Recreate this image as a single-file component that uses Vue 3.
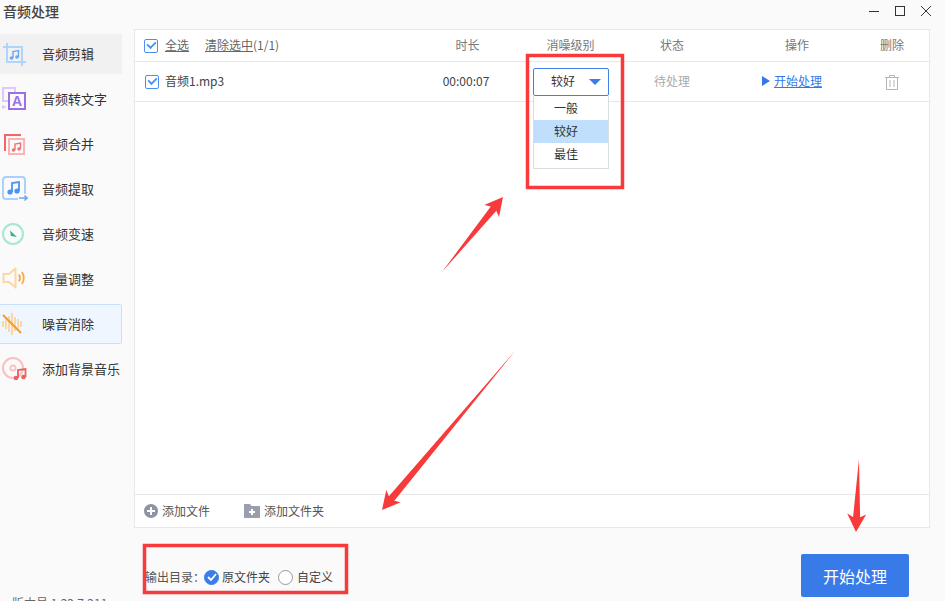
<script setup>
const menu = ['一般', '较好', '最佳']

// red annotation arrows, tail -> tip
function arrow(x0, y0, x1, y1) {
  const dx = x1 - x0
  const dy = y1 - y0
  const len = Math.hypot(dx, dy)
  const ux = dx / len
  const uy = dy / len
  const at = (back, side) =>
    `${(x1 - ux * back - uy * side).toFixed(1)},${(y1 - uy * back + ux * side).toFixed(1)}`
  return [`${x0},${y0}`, at(15, 3.5), at(18, 9.5), `${x1},${y1}`, at(18, -9.5), at(15, -3.5)].join(' ')
}

const arrows = [
  arrow(442, 272, 503, 197),
  arrow(515, 351, 382, 510),
  arrow(859, 459, 856, 532)
]
</script>

<template>
  <div class="page">
    <header class="titlebar">
      <span class="title">音频处理</span>
      <svg class="winctl" width="62" height="29" viewBox="0 0 62 29" fill="none" stroke="#333" stroke-width="1">
        <path d="M0 11.500H10" />
        <rect x="26.500" y="6.500" width="9" height="9" />
        <path d="M52 6L62 16M62 6L52 16" />
      </svg>
    </header>

    <div class="body">
      <aside class="side">
        <div class="item item--hover">
          <svg class="ico" width="28" height="28" viewBox="0 0 28 28" fill="none">
            <path d="M7 3V22H26M3 7H22V26" stroke="#b0d4fb" stroke-width="2" />
            <g fill="#6aa8f2"><circle cx="11.500" cy="18" r="1.800" /><circle cx="17" cy="17" r="1.800" /></g>
            <path d="M13 18V11.500L18.500 10.500V17" stroke="#6aa8f2" stroke-width="1.400" />
          </svg>
          <span>音频剪辑</span>
        </div>
        <div class="item">
          <svg class="ico" width="28" height="28" viewBox="0 0 28 28" fill="none">
            <path d="M9 16H3V3H15V7" stroke="#dccbf7" stroke-width="2" />
            <path d="M2 20L7 22L2 24Z" fill="#dccbf7" />
            <rect x="9" y="8" width="16" height="16" stroke="#9b6fe8" stroke-width="2" />
            <text x="17" y="21" text-anchor="middle" class="ico-a">A</text>
          </svg>
          <span>音频转文字</span>
        </div>
        <div class="item">
          <svg class="ico" width="28" height="28" viewBox="0 0 28 28" fill="none">
            <rect x="9" y="9" width="15" height="15" stroke="#fbb4b4" stroke-width="2" />
            <path d="M5 21V5H21" stroke="#f26868" stroke-width="2" />
            <g fill="#f07070"><circle cx="13.500" cy="20" r="1.700" /><circle cx="19" cy="19" r="1.700" /></g>
            <path d="M15 20V14L20.500 13V19" stroke="#f07070" stroke-width="1.400" />
          </svg>
          <span>音频合并</span>
        </div>
        <div class="item">
          <svg class="ico" width="28" height="28" viewBox="0 0 28 28" fill="none">
            <path d="M18 24H6A3 3 0 0 1 3 21V5A3 3 0 0 1 6 2H22A3 3 0 0 1 25 5V19" stroke="#aad0fb" stroke-width="2" />
            <g fill="#4b94ef"><circle cx="10" cy="17" r="2.600" /><circle cx="17" cy="16" r="2.600" /></g>
            <path d="M12 17V8L19 7V16" stroke="#4b94ef" stroke-width="1.800" />
            <path d="M19 23H27M24.500 20.500L27 23L24.500 25.500" stroke="#6aa8f2" stroke-width="1.600" />
          </svg>
          <span>音频提取</span>
        </div>
        <div class="item">
          <svg class="ico" width="28" height="28" viewBox="0 0 28 28" fill="none">
            <circle cx="13" cy="14" r="10" stroke="#a8e6d0" stroke-width="2" />
            <path d="M10 10.500L17 17L11 16Z" fill="#2fb58a" />
          </svg>
          <span>音频变速</span>
        </div>
        <div class="item">
          <svg class="ico" width="28" height="28" viewBox="0 0 28 28" fill="none">
            <path d="M3.500 9H9L15.500 3.500V22.500L9 17H3.500Z" stroke="#fcd7a3" stroke-width="2" stroke-linejoin="round" />
            <path d="M19 9.500Q21 13 19 16.500M22 7Q25.500 13 22 19" stroke="#f9a94b" stroke-width="1.800" />
          </svg>
          <span>音量调整</span>
        </div>
        <div class="item item--active">
          <svg class="ico" width="28" height="28" viewBox="0 0 28 28" fill="none">
            <path d="M3 11V17M6 9V19M9 6V22M12 3V25M15 7V21M18 9V19M21 11V17" stroke="#fcd7a3" stroke-width="2" />
            <path d="M3 5L21 23" stroke="#f59a2e" stroke-width="2" />
          </svg>
          <span>噪音消除</span>
        </div>
        <div class="item">
          <svg class="ico" width="28" height="28" viewBox="0 0 28 28" fill="none">
            <circle cx="13" cy="13" r="10" stroke="#f9c0c0" stroke-width="2" />
            <circle cx="13" cy="13" r="2.600" stroke="#f9c0c0" stroke-width="1.800" />
            <g fill="#ee5f5f"><circle cx="16" cy="23" r="2.300" /><circle cx="23.500" cy="22" r="2.300" /></g>
            <path d="M18 23V15L25.500 14V22" stroke="#ee5f5f" stroke-width="1.800" />
          </svg>
          <span>添加背景音乐</span>
        </div>
        <div class="version">版本号 1.22.7.211</div>
      </aside>

      <main class="main">
        <section class="panel">
          <div class="grid head">
            <div class="namecell">
              <span class="check"></span>
              <a class="lnk">全选</a>
              <span class="clear"><a class="lnk">清除选中</a>(1/1)</span>
            </div>
            <div>时长</div>
            <div>消噪级别</div>
            <div>状态</div>
            <div>操作</div>
            <div>删除</div>
          </div>

          <div class="grid row">
            <div class="namecell namecell--row">
              <span class="check"></span>
              <span class="fname">音频1.mp3</span>
            </div>
            <div class="time">00:00:07</div>
            <div class="levelcell">
              <div class="select">
                <span class="seltext">较好</span>
                <i class="caret"></i>
              </div>
              <ul class="menu">
                <li v-for="m in menu" :key="m" :class="{ on: m === '较好' }">{{ m }}</li>
              </ul>
            </div>
            <div class="state">待处理</div>
            <div class="op">
              <i class="play"></i>
              <a class="oplink">开始处理</a>
            </div>
            <div class="del">
              <svg width="14" height="15" viewBox="0 0 14 15" fill="none" stroke="#b5b5b5" stroke-width="1">
                <path d="M0 2.500H14M4.500 2.500V.5H9.500V2.500M1.500 2.500V14.500H12.500V2.500M5 5V12M9 5V12" />
              </svg>
            </div>
          </div>

          <div class="spacer"></div>

          <div class="addbar">
            <span class="add">
              <svg width="14" height="14" viewBox="0 0 14 14">
                <circle cx="7" cy="7" r="7" fill="#8c93a5" />
                <path d="M7 3V11M3 7H11" stroke="#fff" stroke-width="2" />
              </svg>
              <span class="txt">添加文件</span>
            </span>
            <span class="add add--dir">
              <svg width="16" height="14" viewBox="0 0 16 14">
                <path d="M0 0H6L7.500 2H16V14H0Z" fill="#9a9fb0" />
                <path d="M8 5V11M5 8H11" stroke="#fff" stroke-width="2" />
              </svg>
              <span class="txt">添加文件夹</span>
            </span>
          </div>
        </section>

        <div class="bottom">
          <div class="output">
            <span class="outlabel txt">输出目录：</span>
            <span class="radio radio--on">
              <svg width="10" height="8" viewBox="0 0 10 8" fill="none" stroke="#fff" stroke-width="1.800">
                <path d="M1 4L4 7L9 1" />
              </svg>
            </span>
            <span class="optname txt">原文件夹</span>
            <span class="radio radio--off"></span>
            <span class="optname txt">自定义</span>
          </div>
          <button type="button" class="start">开始处理</button>
        </div>
      </main>
    </div>

    <svg class="marks" width="945" height="601" viewBox="0 0 945 601">
      <g fill="none" stroke="#f93a3a" stroke-width="3.500">
        <rect x="527.500" y="55.500" width="95" height="132" />
        <rect x="144.500" y="545.500" width="202" height="47" />
      </g>
      <polygon v-for="(a, i) in arrows" :key="i" :points="a" fill="#f93a3a" />
    </svg>
  </div>
</template>

<style scoped>
.page {
  position: relative;
  width: 945px;
  height: 601px;
  overflow: hidden;
  display: flex;
  flex-direction: column;
  background: #fafafa;
  color: #333;
  font-family: "Noto Sans CJK SC", "Noto Sans", sans-serif;
  font-size: 12px;
}

.titlebar {
  flex: none;
  height: 29px;
  display: flex;
  align-items: flex-start;
  justify-content: space-between;
  box-sizing: border-box;
  padding: 0 14px 0 3px;
}

.title {
  font-size: 14px;
  line-height: 22px;
  font-weight: 500;
  color: #444;
}

.body {
  flex: 1;
  min-height: 0;
  display: flex;
  overflow: hidden;
}

.side {
  flex: none;
  width: 122px;
  margin-right: 12px;
  padding-top: 5px;
  box-sizing: border-box;
}

.item {
  height: 40px;
  margin-bottom: 5px;
  display: flex;
  align-items: center;
  box-sizing: border-box;
  font-size: 13px;
  color: #333;
  white-space: nowrap;
}

.item > span {
  padding-bottom: 2px;
}

.ico {
  flex: none;
  margin-right: 14px;
}

.ico-a {
  font-family: "Liberation Sans", sans-serif;
  font-size: 14px;
  font-weight: 700;
  fill: #9b6fe8;
}

.item--hover {
  background: #f1f1f1;
}

.item--active {
  background: #f0f6ff;
  border: 1px solid #c8dffb;
  border-left: none;
  border-radius: 0 2px 2px 0;
}

.version {
  margin: 206px 0 0 12px;
  color: #666;
  line-height: 16px;
  white-space: nowrap;
}

.main {
  flex: none;
  width: 796px;
  display: flex;
  flex-direction: column;
}

.panel {
  flex: none;
  height: 499px;
  box-sizing: border-box;
  display: flex;
  flex-direction: column;
  background: #fff;
  border: 1px solid #e8e8e8;
}

.grid {
  display: grid;
  grid-template-columns: 282px 101px 105px 98px 152px 38px;
  align-items: center;
  text-align: center;
  border-bottom: 1px solid #e8e8e8;
  box-sizing: border-box;
}

.grid > div {
  padding-bottom: 2px;
}

.head {
  flex: none;
  height: 32px;
  color: #777;
}

.row {
  flex: none;
  height: 40px;
}

.namecell {
  display: flex;
  align-items: center;
  padding-left: 9px;
  text-align: left;
}

.namecell--row {
  padding-left: 10px;
}

.check {
  position: relative;
  flex: none;
  width: 14px;
  height: 14px;
  margin: 2px 7px 0 0;
  box-sizing: border-box;
  border: 1px solid #4a90f0;
  border-radius: 2px;
  background: #fff;
}

.check::after {
  content: "";
  position: absolute;
  left: 2px;
  top: 1px;
  width: 7px;
  height: 4px;
  border-left: 2px solid #4a90f0;
  border-bottom: 2px solid #4a90f0;
  transform: rotate(-45deg) scale(0.95);
  box-sizing: content-box;
}

.namecell--row .check {
  margin-right: 6px;
}

.lnk {
  color: #666;
  text-decoration: underline;
}

.clear {
  margin-left: 16px;
  color: #666;
}

.fname {
  color: #444;
}

.time {
  color: #444;
  padding-right: 3px;
}

.grid > .levelcell {
  position: relative;
  display: flex;
  justify-content: center;
  padding: 0 0 0 1px;
}

.select {
  width: 76px;
  height: 28px;
  box-sizing: border-box;
  display: flex;
  align-items: center;
  justify-content: space-between;
  padding: 0 7px 0 17px;
  border: 1px solid #3f7fe6;
  border-radius: 2px;
  background: #fff;
}

.seltext {
  padding-bottom: 2px;
}

.caret {
  width: 0;
  height: 0;
  border-left: 6px solid transparent;
  border-right: 6px solid transparent;
  border-top: 6px solid #3a7ce8;
}

.menu {
  position: absolute;
  top: 28px;
  left: 15px;
  width: 76px;
  margin: 0;
  padding: 1px 0 2px;
  list-style: none;
  box-sizing: border-box;
  background: #fff;
  border: 1px solid #dcdcdc;
  border-top: none;
  z-index: 2;
  text-align: left;
}

.menu li {
  height: 23px;
  line-height: 21px;
  padding-left: 20px;
}

.menu li.on {
  background: #bfdffd;
}

.state {
  color: #aaa;
}

.grid > .op {
  display: flex;
  align-items: center;
  justify-content: center;
  padding-right: 10px;
}

.play {
  width: 0;
  height: 0;
  margin-right: 4px;
  border-top: 5.5px solid transparent;
  border-bottom: 5.5px solid transparent;
  border-left: 8px solid #3478e8;
}

.oplink {
  color: #3478e8;
  text-decoration: underline;
}

.grid > .del {
  display: flex;
  justify-content: center;
  padding: 1px 0 0;
}

.spacer {
  flex: 1;
}

.addbar {
  flex: none;
  height: 33px;
  box-sizing: border-box;
  display: flex;
  align-items: center;
  padding-left: 9px;
  border-top: 1px solid #e8e8e8;
  color: #555;
}

.add {
  display: flex;
  align-items: center;
  gap: 4px;
}

.add--dir {
  margin-left: 34px;
}

.txt {
  padding-bottom: 2px;
}

.bottom {
  flex: 1;
  display: flex;
  align-items: flex-end;
  justify-content: space-between;
  padding: 0 21px 4px 11px;
}

.output {
  display: flex;
  align-items: center;
  height: 16px;
  margin-bottom: 12px;
  color: #555;
}

.outlabel {
  margin-right: -1px;
  white-space: nowrap;
}

.radio {
  flex: none;
  width: 15px;
  height: 15px;
  margin: 0 3px 0 0;
  box-sizing: border-box;
  display: flex;
  align-items: center;
  justify-content: center;
  border: 1px solid #999;
  border-radius: 50%;
  background: #fff;
}

.radio--on {
  background: #3a7ce8;
  border-color: #3a7ce8;
}

.radio--off {
  margin-right: 4px;
}

.optname {
  margin-right: 8px;
  color: #444;
}

.start {
  flex: none;
  width: 108px;
  height: 43px;
  padding: 0;
  border: none;
  border-radius: 2px;
  background: #377ae8;
  color: #fff;
  font-family: inherit;
  font-size: 16px;
}

.marks {
  position: absolute;
  left: 0;
  top: 0;
  pointer-events: none;
  z-index: 5;
}
</style>
